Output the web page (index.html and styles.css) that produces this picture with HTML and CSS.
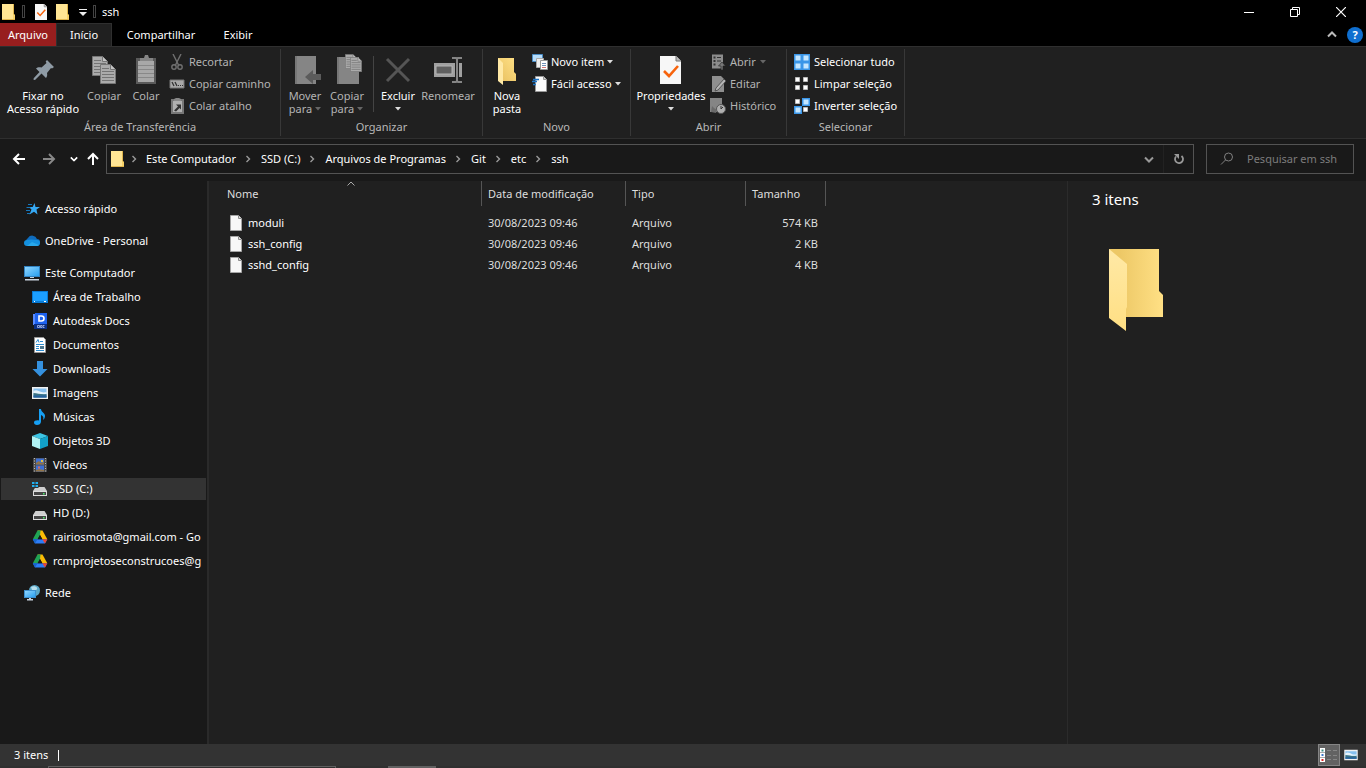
FILE: index.html
```html
<!DOCTYPE html>
<html lang="pt-BR">
<head>
<meta charset="utf-8">
<title>ssh</title>
<link rel="stylesheet" href="styles.css">
</head>
<body>
<svg class="defs" aria-hidden="true">
  <defs>
    <linearGradient id="g-fold" x1="0" y1="1" x2="1" y2="0"><stop offset="0" stop-color="#e8c060"/><stop offset="1" stop-color="#ffe085"/></linearGradient>
    <linearGradient id="g-back" x1="0" y1="0" x2="1" y2="0"><stop offset="0.2" stop-color="#edc866"/><stop offset="1" stop-color="#ffe085"/></linearGradient>
    <linearGradient id="g-flap" x1="0" y1="0" x2="0" y2="1"><stop offset="0" stop-color="#ffe9a6"/><stop offset="1" stop-color="#ffdf83"/></linearGradient>
    <linearGradient id="g-blue" x1="0" y1="0" x2="1" y2="1"><stop offset="0" stop-color="#8fd6ff"/><stop offset="1" stop-color="#2aa0f0"/></linearGradient>
    <symbol id="folder-s" viewBox="0 0 14 16"><path d="M0 0h12v10l1 1v5H0z" fill="#e0b64e"/><path d="M0 0h11v11h1v4H0z" fill="#ffe594"/><path d="M11 10l2 1v4h-2z" fill="#f7d269"/></symbol>
    <symbol id="file" viewBox="0 0 12 16"><path d="M.5.5h8l3 3v12H.5z" fill="#f8f8f8" stroke="#a6a6a6"/><path d="M8.500.5v3h3" fill="#ddd" stroke="#8c8c8c"/></symbol>
    <symbol id="check-doc" viewBox="0 0 21 28"><path d="M0 0h16l5 5v23H0z" fill="#f7f7f7"/><path d="M16 0v5h5" fill="#bbb" stroke="#777"/><path d="M4 15l5 5 9-10" fill="none" stroke="#f7630c" stroke-width="2.600"/></symbol>
    <symbol id="sheet" viewBox="0 0 16 20"><path d="M.5.5h10l5 5v14H.5z" fill="#ababab" stroke="#777"/><path d="M10.500.5v5h5" fill="#c4c4c4" stroke="#777"/><path d="M2 4.500h7M2 7.500h12M2 10.500h12M2 13.500h12M2 16.500h12" stroke="#747474"/></symbol>
    <symbol id="crumb" viewBox="0 0 6 8"><path d="M1.500 1l3 3-3 3" fill="none" stroke="#999" stroke-width="1.400"/></symbol>
    <symbol id="caret" viewBox="0 0 6 4"><path d="M0 0h6L3 3.500z" fill="currentColor"/></symbol>
    <symbol id="down" viewBox="0 0 10 7"><path d="M1 1.500l4 4 4-4" fill="none" stroke="currentColor" stroke-width="2"/></symbol>
    <symbol id="drive" viewBox="0 0 16 16"><path d="M3.500 6h9l2.500 4H1z" fill="#cfcfcf"/><path d="M1 10h14v5H1z" fill="#dcdcdc"/><path d="M2 11h12v3H2z" fill="#454545"/><path d="M11 12h1.500v1.500H11z" fill="#4cf06a"/></symbol>
    <symbol id="gdrive" viewBox="0 0 16 16"><path d="M5.500 1.500h5l4.800 8.800h-5z" fill="#fbbc05"/><path d="M5.500 1.500h3L8 6 5.600 10.300H.8z" fill="#20a454"/><path d="M.8 10.300h14.500L13 14.500H3z" fill="#2d7df6"/><path d="M10.300 10.300h5L13 14.500z" fill="#ea4335"/><path d="M.8 10.300h4.800L3 14.500z" fill="#1765cc"/><path d="M8 6l2.300 4.300H5.600z" fill="#191919"/></symbol>
    <symbol id="photo" viewBox="0 0 16 14"><path d="M0 1h16v12H0z" fill="#f0f0f0"/><path d="M1.500 2.500h13v9h-13z" fill="#86c0ef"/><path d="M1.500 5c3-2 5 0 8 1s4 0 5 0v2h-13z" fill="#e6f3fb"/><path d="M1.500 7c4 0 8 2 13 1v3.500h-13z" fill="#3c7484"/><path d="M1.500 9.500h13v2h-13z" fill="#2762a0"/></symbol>
  </defs>
</svg>

<header class="titlebar">
  <svg class="i-folder"><use href="#folder-s"/></svg>
  <span class="grip"></span>
  <button class="quick" aria-label="Propriedades"><svg width="12" height="16"><use href="#check-doc"/></svg></button>
  <button class="quick" aria-label="Nova pasta"><svg class="i-folder"><use href="#folder-s"/></svg></button>
  <button class="quick more" aria-label="Personalizar"><svg width="8" height="8" viewBox="0 0 8 8"><path d="M0 1.500h8" stroke="#eee"/><path d="M0 4h8L4 8z" fill="#eee"/></svg></button>
  <span class="grip grip-end"></span>
  <h1 class="title">ssh</h1>
  <div class="winbtns">
    <button aria-label="Minimizar"><svg width="10" height="10" viewBox="0 0 10 10"><path d="M0 5.500h10" stroke="#fff"/></svg></button>
    <button aria-label="Restaurar"><svg width="10" height="10" viewBox="0 0 10 10" fill="none" stroke="#fff"><path d="M.5 2.500h7v7h-7zM2.500 2.500v-2h7v7h-2"/></svg></button>
    <button aria-label="Fechar"><svg width="10" height="10" viewBox="0 0 10 10"><path d="M0 0l10 10M10 0L0 10" stroke="#fff" stroke-width="1.200"/></svg></button>
  </div>
</header>

<nav class="tabs">
  <button class="tab tab-file">Arquivo</button>
  <button class="tab tab-on">Início</button>
  <button class="tab tab-wide">Compartilhar</button>
  <button class="tab">Exibir</button>
  <div class="tabs-end">
    <button aria-label="Minimizar a faixa"><svg width="10" height="7" viewBox="0 0 10 7"><path d="M1 5.500l4-4 4 4" fill="none" stroke="#bbb" stroke-width="2"/></svg></button>
    <button class="help" aria-label="Ajuda">?</button>
  </div>
</nav>

<section class="ribbon">
  <div class="group g1">
    <div class="group-body">
      <button class="big w-80"><svg width="32" height="32" viewBox="0 0 32 32"><path d="M20 6l7 7-2 1.500-1-.5-4 5c.5 2 0 4-1 5l-4.500-4.500L8 26l-1.500-.2.200-1.500L12.500 18 9 14.500c1.500-1.500 3.500-1.500 5.500-1L19.500 9l-.8-1.500z" fill="#8f9ba5"/></svg><span>Fixar no<br>Acesso rápido</span></button>
      <button class="big off w-42"><svg width="32" height="32" viewBox="0 0 32 32"><use href="#sheet" x="4" y="2" width="16" height="20"/><use href="#sheet" x="12" y="10" width="16" height="20"/></svg><span>Copiar</span></button>
      <button class="big off w-42"><svg width="32" height="32" viewBox="0 0 32 32"><path d="M6 4h20v26H6z" fill="#5a5a5a"/><path d="M8 7h16v21H8z" fill="#a8a8a8"/><path d="M10 7V4h4l1-3h3l1 3h4v3z" fill="#858585"/><path d="M8 11.500h16M8 15.500h16M8 19.500h16M8 23.500h16" stroke="#888"/></svg><span>Colar</span></button>
      <div class="rows">
        <button class="row off"><svg width="16" height="16" viewBox="0 0 16 16" fill="none" stroke="#707070" stroke-width="1.400"><path d="M4 0l5.500 11M12 0L6.500 11"/><circle cx="5" cy="13" r="2.200"/><circle cx="11" cy="13" r="2.200"/></svg>Recortar</button>
        <button class="row off"><svg width="16" height="16" viewBox="0 0 16 16"><path d="M1 4h14v8H1z" fill="#a9a9a9" stroke="#777"/><path d="M3 6l2 4M6 6l2 4" stroke="#333" stroke-width="1.300"/><path d="M9 9.500h1M11 9.500h1M13 9.500h1" stroke="#333"/></svg>Copiar caminho</button>
        <button class="row off"><svg width="16" height="16" viewBox="0 0 16 16"><path d="M2 1h13v15H2z" fill="#777"/><path d="M4 3h9v11H4z" fill="#b0b0b0"/><path d="M5 3V1l2-1h3l2 1v2z" fill="#888"/><path d="M5 12.500l4-4L7 6.500h5v5l-1.500-1.500-3.500 3.500z" fill="#333"/></svg>Colar atalho</button>
      </div>
    </div>
    <div class="group-name">Área de Transferência</div>
  </div>
  <div class="group g2">
    <div class="group-body">
      <button class="big off w-42"><svg width="32" height="32" viewBox="0 0 32 32"><path d="M6 2h21v28H6z" fill="#858585"/><path d="M6 2h2v28H6z" fill="#777"/><path d="M16 23l8-7v4h8v6h-8v4z" fill="#5b5b5b"/></svg><span>Mover<br>para <svg class="caret"><use href="#caret"/></svg></span></button>
      <button class="big off w-42"><svg width="32" height="32" viewBox="0 0 32 32"><path d="M6 3h22v27H6z" fill="#858585"/><path d="M6 3h2v27H6z" fill="#777"/><use href="#sheet" x="14" y="0" width="12" height="15"/><use href="#sheet" x="19" y="3" width="12" height="15"/></svg><span>Copiar<br>para <svg class="caret"><use href="#caret"/></svg></span></button>
      <span class="divider"></span>
      <button class="big w-46"><svg width="32" height="32" viewBox="0 0 32 32"><path d="M5 5l22 22M27 5L5 27" stroke="#555" stroke-width="3"/></svg><span>Excluir<br><svg class="caret"><use href="#caret"/></svg></span></button>
      <button class="big off w-54"><svg width="32" height="32" viewBox="0 0 32 32"><path d="M2 9h28v14H2z" fill="#a0a0a0"/><path d="M4 12h16v8H4z" fill="#606060" stroke="#b5b5b5"/><path d="M20 4h4l1 1 1-1h4M20 28h4l1-1 1 1h4M25 5v22" stroke="#202020" stroke-width="4" fill="none"/><path d="M20 4h4l1 1 1-1h4M20 28h4l1-1 1 1h4M25 5v22" stroke="#858585" stroke-width="2" fill="none"/></svg><span>Renomear</span></button>
    </div>
    <div class="group-name">Organizar</div>
  </div>
  <div class="group g3">
    <div class="group-body">
      <button class="big w-42"><svg width="32" height="32" viewBox="0 0 32 32"><path d="M7 4h16v14l2 2v7H7z" fill="url(#g-fold)"/><path d="M7 4l5 5v22l-5-4z" fill="#ffe9a6"/></svg><span>Nova<br>pasta</span></button>
      <div class="rows">
        <button class="row"><svg width="16" height="16" viewBox="0 0 16 16"><path d="M.5.5h10v7H.5z" fill="#b6dcfa" stroke="#4b8cc4"/><path d="M4.500 4.500h7v9h-7z" fill="#eee" stroke="#aaa"/><path d="M8.500 6.500h7v9h-7z" fill="#fff" stroke="#999"/><path d="M10 9.500h4M10 11.500h4" stroke="#7492b8"/><path d="M10 13.500h4" stroke="#d67a7a"/></svg>Novo item <svg class="caret"><use href="#caret"/></svg></button>
        <button class="row"><svg width="16" height="16" viewBox="0 0 16 16"><path d="M3.500.5h8l3 3v12h-11z" fill="#fafafa" stroke="#999"/><path d="M11.500.5v3h3" fill="#ccc" stroke="#999"/><path d="M1 3.500h6M0 5.500h5M1 8.500h3" stroke="#1c73c4" stroke-width="1.400"/></svg>Fácil acesso <svg class="caret"><use href="#caret"/></svg></button>
      </div>
    </div>
    <div class="group-name">Novo</div>
  </div>
  <div class="group g4">
    <div class="group-body">
      <button class="big w-74"><svg width="32" height="32" viewBox="0 0 32 32"><use href="#check-doc" x="5" y="2" width="21" height="28"/></svg><span>Propriedades<br><svg class="caret"><use href="#caret"/></svg></span></button>
      <div class="rows">
        <button class="row off"><svg width="16" height="16" viewBox="0 0 16 16"><path d="M2 .5h11v14H2z" fill="#8c8c8c"/><path d="M3.500 2.500h2v2h-2zM3.500 6h2v2h-2zM3.500 9.500h2v2h-2zM7 3h4v1H7zM7 6.500h4v1H7z" fill="#333"/><path d="M11 16v-4H8.500L12 8l3.500 4H13v4z" fill="#777" stroke="#202020" stroke-width=".6"/></svg>Abrir <svg class="caret"><use href="#caret"/></svg></button>
        <button class="row off"><svg width="16" height="16" viewBox="0 0 16 16"><path d="M2 0h9l3 3v13H2z" fill="#8f8f8f"/><path d="M5 15l1-3 8-9 2 2-8 9z" fill="#b5b5b5" stroke="#444" stroke-width=".8"/></svg>Editar</button>
        <button class="row off"><svg width="16" height="16" viewBox="0 0 16 16"><path d="M0 0h12v14H0z" fill="#858585"/><circle cx="11" cy="11" r="4.500" fill="#b0b0b0" stroke="#555"/><path d="M11 8v3l2-2" stroke="#333" fill="none"/><path d="M1 14l1-6 2 2 3 2-1 3z" fill="#6a6a6a"/></svg>Histórico</button>
      </div>
    </div>
    <div class="group-name">Abrir</div>
  </div>
  <div class="group g5">
    <div class="group-body">
      <div class="rows">
        <button class="row"><svg width="16" height="16" viewBox="0 0 16 16"><path d="M0 0h16v16H0z" fill="#3a96e8"/><path d="M1.500 1.500h5v5h-5zM9.500 1.500h5v5h-5zM1.500 9.500h5v5h-5zM9.500 9.500h5v5h-5z" fill="#c4e6ff"/></svg>Selecionar tudo</button>
        <button class="row"><svg width="16" height="16" viewBox="0 0 16 16" fill="#fff" stroke="#bbb"><path d="M1.500 1.500h4v4h-4zM9.500 1.500h4v4h-4zM1.500 9.500h4v4h-4zM9.500 9.500h4v4h-4z"/></svg>Limpar seleção</button>
        <button class="row"><svg width="16" height="16" viewBox="0 0 16 16"><path d="M8 0h8v8H8zM0 8h8v8H0z" fill="#3a96e8"/><path d="M9.500 1.500h5v5h-5zM1.500 9.500h5v5h-5z" fill="#c4e6ff"/><path d="M1.500 1.500h4v4h-4zM9.500 9.500h4v4h-4z" fill="#fff" stroke="#bbb"/></svg>Inverter seleção</button>
      </div>
    </div>
    <div class="group-name">Selecionar</div>
  </div>
</section>

<div class="navbar">
  <div class="arrows">
    <button aria-label="Voltar"><svg width="14" height="12" viewBox="0 0 14 12"><path d="M13 6H2M7 1L2 6l5 5" fill="none" stroke="#fff" stroke-width="2"/></svg></button>
    <button aria-label="Avançar"><svg width="14" height="12" viewBox="0 0 14 12"><path d="M1 6h11M7 1l5 5-5 5" fill="none" stroke="#888" stroke-width="2"/></svg></button>
    <button class="narrow" aria-label="Locais recentes"><svg width="8" height="6" viewBox="0 0 10 7"><use href="#down"/></svg></button>
    <button class="narrow" aria-label="Acima"><svg width="12" height="14" viewBox="0 0 12 14"><path d="M6 13V2M1 7l5-5 5 5" fill="none" stroke="#fff" stroke-width="2"/></svg></button>
  </div>
  <div class="address">
    <svg class="i-folder"><use href="#folder-s"/></svg>
    <svg class="crumb first"><use href="#crumb"/></svg><a href="#">Este Computador</a>
    <svg class="crumb"><use href="#crumb"/></svg><a href="#">SSD (C:)</a>
    <svg class="crumb"><use href="#crumb"/></svg><a href="#">Arquivos de Programas</a>
    <svg class="crumb"><use href="#crumb"/></svg><a href="#">Git</a>
    <svg class="crumb"><use href="#crumb"/></svg><a href="#">etc</a>
    <svg class="crumb"><use href="#crumb"/></svg><a href="#">ssh</a>
    <button class="addr-down" aria-label="Locais anteriores"><svg width="10" height="7"><use href="#down"/></svg></button>
    <button class="reload" aria-label="Atualizar"><svg width="12" height="12" viewBox="0 0 12 12"><path d="M8.500 3A4 4 0 1 1 3 3.500" fill="none" stroke="#999" stroke-width="1.800"/><path d="M1 1h5v5z" fill="#999"/></svg></button>
  </div>
  <label class="search">
    <svg width="14" height="14" viewBox="0 0 14 14" fill="none" stroke="#808080"><circle cx="8.500" cy="5" r="4"/><path d="M5.500 8L1 12.500"/></svg>
    <input type="text" placeholder="Pesquisar em ssh" aria-label="Pesquisar em ssh">
  </label>
</div>

<main class="content">
  <aside class="tree">
    <a class="node top" href="#"><svg viewBox="0 0 16 16"><path d="M10.500 2l1 4H16l-3.500 2.500L13.500 13.500 10 10.800 5.500 13.500l2-5L5 6h3.700z" fill="#36a9f4"/><path d="M4 3.500h4M2.500 6.500h4M2 9.500h4M3 12.500h3" stroke="#1678bd"/></svg>Acesso rápido</a>
    <a class="node top gap" href="#"><svg viewBox="0 0 16 16"><path d="M4 12a4 4 0 0 1 0-7 5 5 0 0 1 9 1 3 3 0 0 1 0 6z" fill="#0f6cbd"/><path d="M3 13a3 3 0 0 1 0-6l4-.5L13 7a3 3 0 0 1 0 6z" fill="#1490df"/><path d="M3 13l5-4 7 3-1.500 1z" fill="#28a8ea"/></svg>OneDrive - Personal</a>
    <a class="node top gap" href="#"><svg viewBox="0 0 16 16"><path d="M0 1h16v11H0z" fill="#3283c2"/><path d="M1 2h14v9H1z" fill="url(#g-blue)"/><path d="M6 12h4v1H6zM1 14h14v1.500H1z" fill="#c9d4df"/></svg>Este Computador</a>
    <a class="node" href="#"><svg viewBox="0 0 16 16"><path d="M0 2h16v12H0z" fill="#087bd5"/><path d="M1 3h14v9H1z" fill="#1c9fff"/><path d="M2 12.500h1M12 12.500h2" stroke="#fff"/></svg>Área de Trabalho</a>
    <a class="node" href="#"><svg viewBox="0 0 16 16"><path d="M1 1h2v11H1z" fill="#5b8cff"/><path d="M3 0h12v11H3z" fill="#1e62ee"/><path d="M2 11h13v5H2z" fill="#0a2e83"/><path d="M7 3h2.500a2.200 2.200 0 0 1 0 5H7z" fill="none" stroke="#fff" stroke-width="1.600"/><path d="M5.500 12.500h2v2h-2zM8.500 12.500h1.500v2H8.500zM12.500 12.500H11v2h1.500" fill="none" stroke="#c8d7ff" stroke-width=".7"/></svg>Autodesk Docs</a>
    <a class="node" href="#"><svg viewBox="0 0 16 16"><path d="M2.500.5h9l2 2v13h-11z" fill="#fff" stroke="#999"/><path d="M4 5.500l2-3 1 3M8 4.500h3M4 7.500h8M4 9.500h3M4 11.500h3M4 13.500h8" fill="none" stroke="#2a8bd0"/><path d="M8 9h4v3H8z" fill="#4d7890"/></svg>Documentos</a>
    <a class="node" href="#"><svg viewBox="0 0 16 16"><path d="M5 0h6v8h4.500L8 15.500.5 8H5z" fill="#3591df"/></svg>Downloads</a>
    <a class="node" href="#"><svg viewBox="0 0 16 14"><use href="#photo"/></svg>Imagens</a>
    <a class="node" href="#"><svg viewBox="0 0 16 16"><path d="M7 0h2c0 3 4 4 4 7 0 2-1 3-2 4 1-3 0-4-2-5v6.500C9 15 7 16 5 16s-3-1-3-2.500S4 11 7 11.500z" fill="#16a0f5"/></svg>Músicas</a>
    <a class="node" href="#"><svg viewBox="0 0 16 16"><path d="M0 3l8-3 8 3-8 3z" fill="#3cc5e4"/><path d="M0 3l8 3v10l-8-3z" fill="#b1f3f4"/><path d="M16 3L8 6v10l8-3z" fill="#12a0c8"/></svg>Objetos 3D</a>
    <a class="node" href="#"><svg viewBox="0 0 16 16"><path d="M1 1h14v14H1z" fill="#4a4a4a"/><path d="M4 1.500h8v6H4zM4 8.500h8v6H4z" fill="#3e70d4"/><path d="M4 6l3-2 2 2 3-1v2.500H4zM4 13l3-1 5 1v1.500H4z" fill="#917448"/><path d="M2.500 1v14M13.500 1v14" stroke="#bbb" stroke-dasharray="1 1.500"/><path d="M9 3h2v2H9z" fill="#e4c13e"/><path d="M6 9.500h2v2H6z" fill="#d86a5c"/></svg>Vídeos</a>
    <a class="node on" href="#"><svg viewBox="0 0 16 16"><use href="#drive"/><path d="M0 0h6.500v7H0z" fill="#333"/><path d="M0 1h2.500v2H0zM3.500 1H6v2H3.500zM0 4h2.500v2H0zM3.500 4H6v2H3.500z" fill="#22b0f0"/></svg>SSD (C:)</a>
    <a class="node" href="#"><svg viewBox="0 0 16 16"><use href="#drive"/></svg>HD (D:)</a>
    <a class="node" href="#"><svg viewBox="0 0 16 16"><use href="#gdrive"/></svg>rairiosmota@gmail.com - Go</a>
    <a class="node" href="#"><svg viewBox="0 0 16 16"><use href="#gdrive"/></svg>rcmprojetoseconstrucoes@g</a>
    <a class="node top gap" href="#"><svg viewBox="0 0 16 16"><circle cx="10.500" cy="5.500" r="5.500" fill="#5aa8c8"/><path d="M7 2c3-2 7 0 6 2s-3 2-5 1z" fill="#b7dfec"/><path d="M0 5h12v8H0z" fill="#3d90cf"/><path d="M1 6h10v6H1z" fill="url(#g-blue)"/><path d="M5 13h2v1H5zM3 14h6v1.500H3z" fill="#c9d4df"/></svg>Rede</a>
  </aside>

  <section class="files">
    <svg class="sort" width="8" height="5" viewBox="0 0 8 5"><path d="M.5 4.500L4 1l3.500 3.500" fill="none" stroke="#aaa"/></svg>
    <table>
      <colgroup><col class="c-name"><col class="c-date"><col class="c-type"><col class="c-size"></colgroup>
      <thead><tr><th>Nome</th><th>Data de modificação</th><th>Tipo</th><th>Tamanho</th></tr></thead>
      <tbody>
        <tr><td><svg width="12" height="16"><use href="#file"/></svg>moduli</td><td>30/08/2023 09:46</td><td>Arquivo</td><td>574 KB</td></tr>
        <tr><td><svg width="12" height="16"><use href="#file"/></svg>ssh_config</td><td>30/08/2023 09:46</td><td>Arquivo</td><td>2 KB</td></tr>
        <tr><td><svg width="12" height="16"><use href="#file"/></svg>sshd_config</td><td>30/08/2023 09:46</td><td>Arquivo</td><td>4 KB</td></tr>
      </tbody>
    </table>
  </section>

  <aside class="preview">
    <h2>3 itens</h2>
    <svg width="55" height="82" viewBox="0 0 55 82"><path d="M0 0h50v42l4 4v22H0z" fill="url(#g-back)"/><path d="M0 0l18 15v43l-1 2v22L0 69z" fill="url(#g-flap)"/></svg>
  </aside>
</main>

<footer class="status">
  <span>3 itens</span><i class="bar"></i>
  <div class="views">
    <button class="on" aria-label="Detalhes"><svg width="18" height="14" viewBox="0 0 18 14"><path d="M0 0h5v14H0z" fill="#fff"/><path d="M0 4.500h5M0 9.500h5" stroke="#aaa"/><path d="M1.500 1.500h2v2h-2z" fill="#3a8f84"/><path d="M1.500 6h2v2h-2z" fill="#3c78c8"/><path d="M1.500 11h2v2h-2z" fill="#d22"/><path d="M7 2.500h4M13 2.500h4M7 7.500h4M13 7.500h4M7 11.500h4M13 11.500h4" stroke="#858585"/></svg></button>
    <button aria-label="Ícones grandes"><svg width="14" height="12" viewBox="0 0 16 14"><use href="#photo"/></svg></button>
  </div>
</footer>
<div class="taskbar"><span class="task-search"></span><span class="task-app"></span></div>
</body>
</html>
```
FILE: styles.css
```css
* { box-sizing: border-box; }
body {
  margin: 0;
  height: 100vh;
  display: flex;
  flex-direction: column;
  overflow: hidden;
  background: #191919;
  color: #fff;
  font: 11px/16px "Noto Sans", "Open Sans", sans-serif;
}
button, input { font: inherit; color: inherit; background: none; border: 0; padding: 0; margin: 0; }
a { color: inherit; text-decoration: none; }
svg { display: block; flex: none; }
.defs { width: 0; height: 0; position: absolute; }
.i-folder { width: 14px; height: 16px; }

.titlebar { display: flex; align-items: center; height: 23px; flex: none; background: #000; padding-left: 2px; }
.grip { width: 3px; height: 13px; border: 1px solid #444; margin: 0 10px 0 6px; }
.grip-end { margin-right: 6px; }
.quick { display: flex; margin-right: 9px; }
.quick.more { margin-right: 0; }
.title { font-size: 11px; font-weight: 400; margin: 0; }
.winbtns { display: flex; margin-left: auto; padding-right: 2px; }
.winbtns button { width: 46px; height: 20px; display: grid; place-items: center; }

.tabs { display: flex; height: 23px; flex: none; background: #000; }
.tab { width: 56px; text-align: center; }
.tab-file { background: #971e1e; }
.tab-on { background: #202020; border: solid #2f2f2f; border-width: 1px 1px 0; }
.tab-wide { width: 98px; }
.tabs-end { margin-left: auto; display: flex; align-items: center; gap: 10px; padding-right: 3px; }
.help { width: 16px; height: 16px; border-radius: 50%; background: #0f6fd0; font-weight: 700; line-height: 16px; text-align: center; }

.ribbon { display: flex; height: 93px; flex: none; background: #202020; border: solid #2f2f2f; border-width: 1px 0; }
.group { display: flex; flex-direction: column; border-right: 1px solid #383838; margin: 2px 0; }
.g1 { width: 281px; }
.g2 { width: 202px; }
.g3 { width: 148px; }
.g4 { width: 156px; }
.g5 { width: 118px; }
.group-body { display: flex; height: 72px; padding-left: 3px; }
.group-name { text-align: center; color: #b8b8b8; line-height: 18px; }
.big { display: flex; flex-direction: column; align-items: center; gap: 3px; padding-top: 5px; line-height: 13px; text-align: center; white-space: nowrap; }
.big span { width: max-content; }
.w-42 { width: 42px; }
.w-46 { width: 46px; }
.w-54 { width: 54px; }
.w-74 { width: 74px; }
.w-80 { width: 80px; }
.off { color: #b4b4b4; }
.off .caret { color: #666; }
.caret { display: inline-block; width: 6px; height: 4px; vertical-align: 2px; color: #ddd; }
.divider { width: 1px; height: 56px; margin: 7px 1px 0 5px; background: #444; }
.rows { padding: 2px 0 0 2px; }
.row { display: flex; align-items: center; gap: 4px; height: 22px; white-space: nowrap; }
.g3 .rows { padding-left: 4px; }
.g3 .row { gap: 3px; }
.g5 .rows { padding-left: 4px; }

.navbar { display: flex; align-items: center; height: 42px; flex: none; padding: 0 12px 2px 4px; }
.arrows { display: flex; width: 102px; }
.arrows button { width: 30px; height: 30px; display: grid; place-items: center; }
.arrows .narrow { width: 19px; }
.address { flex: 1; display: flex; align-items: center; height: 30px; border: 1px solid #535353; padding-left: 4px; margin-right: 12px; font-size: 11px; }
.crumb { width: 6px; height: 8px; margin: 0 10px 0 9px; }
.crumb.first { margin: 0 9px 0 6px; }
.addr-down { margin-left: auto; color: #999; height: 28px; padding-right: 9px; border-right: 1px solid #222; }
.reload { width: 29px; height: 28px; display: grid; place-items: center; }
.search { display: flex; align-items: center; gap: 13px; width: 148px; height: 30px; border: 1px solid #535353; padding-left: 13px; }
.search input { min-width: 0; flex: 1; outline: 0; }
.search input::placeholder { color: #7c7c7c; opacity: 1; }

.content { flex: 1; display: flex; min-height: 0; background: #202020; }
.tree { width: 209px; flex: none; background: #191919; border-right: 2px solid #2a2a2a; padding-top: 16px; overflow: hidden; }
.node { display: flex; align-items: center; gap: 5px; height: 22px; margin: 1px 1px 2px 1px; padding-left: 31px; white-space: nowrap; }
.node svg { width: 16px; height: 16px; }
.node.top { padding-left: 23px; }
.node.gap { margin-top: 10px; }
.node.on { background: #333; }

.files { flex: 1; min-width: 0; position: relative; }
.sort { position: absolute; left: 138px; top: 0; }
table { border-collapse: separate; border-spacing: 0; table-layout: fixed; width: 617px; color: #dedede; }
.c-name { width: 273px; }
.c-date { width: 144px; }
.c-type { width: 120px; }
.c-size { width: 80px; }
th { height: 25px; font-weight: 400; text-align: left; padding: 0 0 0 6px; border-right: 1px solid #555; }
th:first-child { padding-left: 18px; }
tbody::before { content: ""; display: block; height: 6px; }
td { height: 21px; padding: 0 0 0 6px; }
td:first-child { display: flex; align-items: center; gap: 6px; padding-left: 21px; color: #fff; }
td:last-child { text-align: right; padding-right: 8px; }

.preview { width: 299px; flex: none; border-left: 1px solid #2b2b2b; padding: 8px 24px; }
.preview h2 { font-size: 15px; line-height: 20px; font-weight: 400; margin: 0; }
.preview svg { margin: 40px 0 0 17px; }

.status { display: flex; align-items: center; height: 22px; flex: none; background: #333; padding-left: 14px; }
.bar { width: 1px; height: 11px; background: #fff; margin-left: 10px; }
.views { display: flex; margin-left: auto; padding-right: 4px; }
.views button { width: 22px; height: 22px; display: grid; place-items: center; }
.views .on { background: #626262; border: 1px solid #858585; }
.taskbar { display: flex; gap: 52px; height: 2px; flex: none; background: #303030; padding-left: 48px; }
.task-search { width: 288px; border: 1px solid #606060; border-bottom: 0; }
.task-app { width: 48px; background: #616161; }
```
